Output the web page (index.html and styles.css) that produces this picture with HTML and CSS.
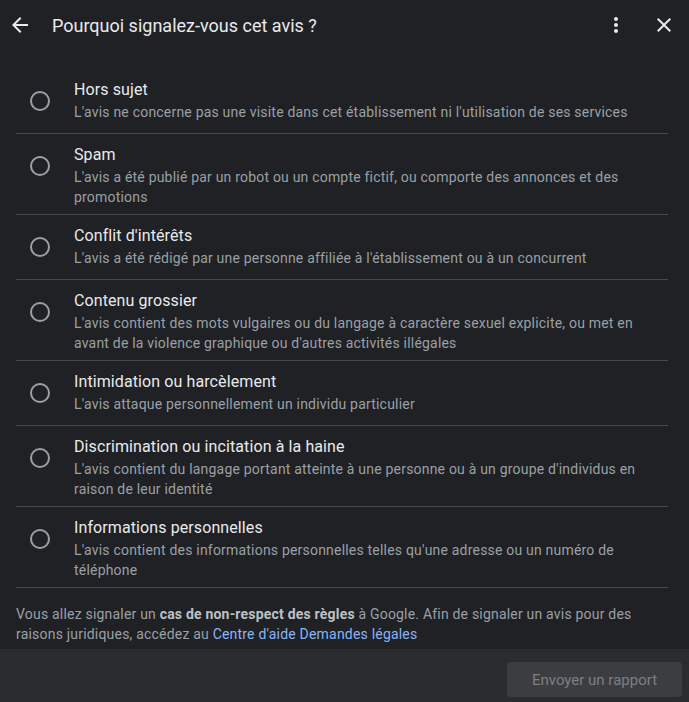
FILE: index.html
```html
<!DOCTYPE html>
<html lang="fr">
<head>
  <meta charset="UTF-8">
  <meta name="viewport" content="width=device-width, initial-scale=1.0">
  <title>Signaler un avis</title>
  <link rel="stylesheet" href="styles.css">
</head>
<body>

  <div class="dialog">
    <div class="header">
      <button class="icon-btn back" aria-label="Retour">
        <svg width="24" height="24" viewBox="0 0 24 24"><path fill="currentColor" d="M20 11H7.83l5.59-5.59L12 4l-8 8 8 8 1.41-1.41L7.83 13H20v-2z"/></svg>
      </button>
      <h1 class="title">Pourquoi signalez-vous cet avis ?</h1>
      <button class="icon-btn" aria-label="Plus d'options">
        <svg width="24" height="24" viewBox="0 0 24 24"><path fill="currentColor" d="M12 8c1.1 0 2-.9 2-2s-.9-2-2-2-2 .9-2 2 .9 2 2 2zm0 2c-1.1 0-2 .9-2 2s.9 2 2 2 2-.9 2-2-.9-2-2-2zm0 6c-1.1 0-2 .9-2 2s.9 2 2 2 2-.9 2-2-.9-2-2-2z"/></svg>
      </button>
      <button class="icon-btn" aria-label="Fermer">
        <svg width="24" height="24" viewBox="0 0 24 24"><path fill="currentColor" d="M19 6.41L17.59 5 12 10.59 6.41 5 5 6.41 10.59 12 5 17.59 6.41 19 12 13.41 17.59 19 19 17.59 13.41 12z"/></svg>
      </button>
    </div>

    <div class="options">
      <label class="option">
        <span class="radio"><input type="radio" name="reason"><span class="circle"></span></span>
        <span class="text">
          <span class="label">Hors sujet</span>
          <span class="desc">L'avis ne concerne pas une visite dans cet établissement ni l'utilisation de ses services</span>
        </span>
      </label>
      <label class="option">
        <span class="radio"><input type="radio" name="reason"><span class="circle"></span></span>
        <span class="text">
          <span class="label">Spam</span>
          <span class="desc">L'avis a été publié par un robot ou un compte fictif, ou comporte des annonces et des promotions</span>
        </span>
      </label>
      <label class="option">
        <span class="radio"><input type="radio" name="reason"><span class="circle"></span></span>
        <span class="text">
          <span class="label">Conflit d'intérêts</span>
          <span class="desc">L'avis a été rédigé par une personne affiliée à l'établissement ou à un concurrent</span>
        </span>
      </label>
      <label class="option">
        <span class="radio"><input type="radio" name="reason"><span class="circle"></span></span>
        <span class="text">
          <span class="label">Contenu grossier</span>
          <span class="desc">L'avis contient des mots vulgaires ou du langage à caractère sexuel explicite, ou met en avant de la violence graphique ou d'autres activités illégales</span>
        </span>
      </label>
      <label class="option">
        <span class="radio"><input type="radio" name="reason"><span class="circle"></span></span>
        <span class="text">
          <span class="label">Intimidation ou harcèlement</span>
          <span class="desc">L'avis attaque personnellement un individu particulier</span>
        </span>
      </label>
      <label class="option">
        <span class="radio"><input type="radio" name="reason"><span class="circle"></span></span>
        <span class="text">
          <span class="label">Discrimination ou incitation à la haine</span>
          <span class="desc">L'avis contient du langage portant atteinte à une personne ou à un groupe d'individus en raison de leur identité</span>
        </span>
      </label>
      <label class="option">
        <span class="radio"><input type="radio" name="reason"><span class="circle"></span></span>
        <span class="text">
          <span class="label">Informations personnelles</span>
          <span class="desc">L'avis contient des informations personnelles telles qu'une adresse ou un numéro de téléphone</span>
        </span>
      </label>
    </div>

    <p class="notice">Vous allez signaler un <strong>cas de non-respect des règles</strong> à Google. Afin de signaler un avis pour des raisons juridiques, accédez au <a href="#">Centre d'aide Demandes légales</a></p>

    <div class="footer">
      <button class="submit" disabled>Envoyer un rapport</button>
    </div>
  </div>

</body>
</html>
```

FILE: styles.css
```css
body {
  font-family: Roboto, "Noto Sans", Arial, sans-serif;
  background-color: #202124;
  color: #e8eaed;
  margin: 0;
}

.dialog {
  width: 689px;
  height: 702px;
  display: flex;
  flex-direction: column;
  overflow: hidden;
}

.header {
  display: flex;
  align-items: center;
  height: 50px;
  padding: 0 1px 0 8px;
}

.icon-btn {
  background: none;
  border: none;
  color: #e8eaed;
  width: 48px;
  height: 48px;
  padding: 12px;
  display: flex;
  align-items: center;
  justify-content: center;
  cursor: pointer;
}

.icon-btn.back {
  width: 24px;
  height: 24px;
  padding: 0;
  margin-right: 20px;
}

.title {
  flex: 1;
  margin: 0;
  font-size: 18px;
  font-weight: 400;
  color: #e8eaed;
}

.options {
  margin: 19px 21px 0 16px;
}

.option {
  display: flex;
  min-height: 64px;
  border-top: 1px solid #48494d;
  cursor: pointer;
}

.option:first-child {
  border-top: none;
}

.option:last-child {
  border-bottom: 1px solid #48494d;
}

.radio {
  flex: none;
  width: 44px;
  height: 64px;
  padding-left: 14px;
  display: flex;
  align-items: center;
}

.radio input {
  display: none;
}

.circle {
  width: 16px;
  height: 16px;
  border: 2px solid #9aa0a6;
  border-radius: 50%;
}

.text {
  flex: 1;
  display: flex;
  flex-direction: column;
  padding: 11px 0 7px;
}

.label {
  font-size: 16px;
  line-height: 20px;
  letter-spacing: 0.1px;
  color: #e8eaed;
}

.desc {
  margin-top: 2px;
  font-size: 14px;
  line-height: 20px;
  letter-spacing: 0.2px;
  color: #9aa0a6;
}

.notice {
  margin: 0;
  padding: 16px 16px 5px;
  font-size: 14px;
  line-height: 20px;
  letter-spacing: 0.2px;
  color: #9aa0a6;
}

.notice strong {
  color: #bdc1c6;
}

.notice a {
  color: #8ab4f8;
  text-decoration: none;
}

.footer {
  flex: 1;
  background-color: #2b2c2f;
  display: flex;
  justify-content: flex-end;
  align-items: flex-start;
  padding: 13px 7px 0 0;
}

.submit {
  width: 175px;
  height: 35px;
  background-color: #3c3d40;
  color: #7d7f83;
  border: none;
  border-radius: 4px;
  font-family: Roboto, Arial, sans-serif;
  font-size: 15px;
}
```
